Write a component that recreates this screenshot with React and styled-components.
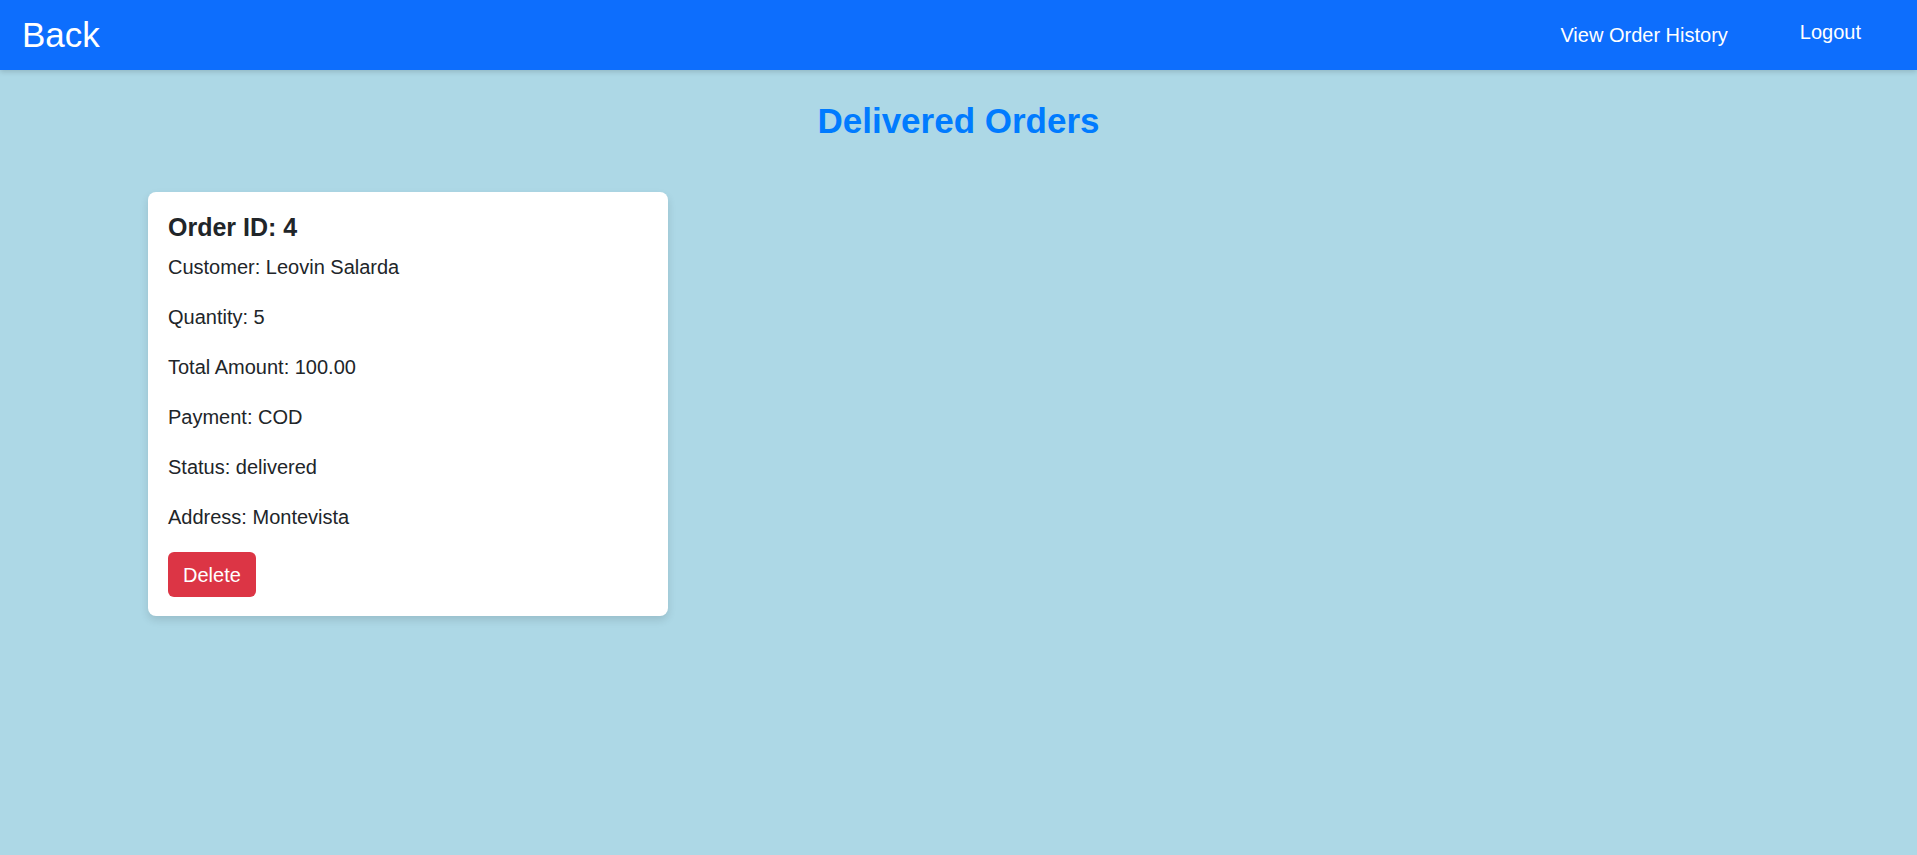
import React from "react";
import styled, { createGlobalStyle } from "styled-components";

const colors = {
  page: "#add8e6",
  nav: "#0d6efd",
  title: "#007bff",
  text: "#212529",
  danger: "#dc3545",
  white: "#ffffff",
};

const GlobalStyle = createGlobalStyle`
  html, body {
    margin: 0;
    min-height: 100%;
    background: ${colors.page};
    font-family: "Liberation Sans", Arial, sans-serif;
    color: ${colors.text};
  }
  body {
    min-height: 100vh;
  }
`;

const Navbar = styled.nav`
  height: 70px;
  background-color: ${colors.nav};
  display: flex;
  align-items: center;
  justify-content: space-between;
  padding: 0 36px 0 22px;
  box-shadow: 0 2px 5px rgba(0, 0, 0, 0.15);
`;

const BackLink = styled.a`
  color: ${colors.white};
  font-size: 35px;
  text-decoration: none;
  cursor: pointer;
`;

const NavLinks = styled.div`
  display: flex;
  align-items: center;
  gap: 32px;
`;

const NavLink = styled.a`
  color: ${colors.white};
  font-size: 20px;
  padding: 10px 20px;
  text-decoration: none;
  cursor: pointer;
`;

const LogoutButton = styled.button`
  background: ${colors.nav};
  color: ${colors.white};
  border: none;
  font-family: inherit;
  font-size: 20px;
  padding: 10px 20px;
  margin-bottom: 6px;
  cursor: pointer;
`;

const Title = styled.h2`
  text-align: center;
  color: ${colors.title};
  font-size: 35px;
  font-weight: 700;
  line-height: 1.2;
  margin: 30px 0 50px;
`;

const OrderGrid = styled.div`
  display: grid;
  grid-template-columns: repeat(auto-fill, 520px);
  gap: 20px;
  padding: 0 148px;
`;

const OrderCard = styled.div`
  background: ${colors.white};
  border-radius: 8px;
  padding: 20px 20px 19px;
  box-shadow: 0 4px 8px rgba(0, 0, 0, 0.12);
`;

const OrderTitle = styled.h3`
  font-size: 25px;
  font-weight: 700;
  line-height: 1.2;
  margin: 0 0 10px;
`;

const Detail = styled.p`
  font-size: 20px;
  line-height: 1.5;
  margin: 0 0 20px;
`;

const DeleteButton = styled.button`
  background-color: ${colors.danger};
  color: ${colors.white};
  border: none;
  border-radius: 6px;
  font-family: inherit;
  font-size: 20px;
  line-height: 30px;
  padding: 7.5px 15px;
  cursor: pointer;
`;

const orders = [
  {
    id: 4,
    customer: "Leovin Salarda",
    quantity: 5,
    total: "100.00",
    payment: "COD",
    status: "delivered",
    address: "Montevista",
  },
];

function App() {
  return (
    <>
      <GlobalStyle />
      <Navbar>
        <BackLink>Back</BackLink>
        <NavLinks>
          <NavLink>View Order History</NavLink>
          <LogoutButton>Logout</LogoutButton>
        </NavLinks>
      </Navbar>
      <Title>Delivered Orders</Title>
      <OrderGrid>
        {orders.map((order) => (
          <OrderCard key={order.id}>
            <OrderTitle>Order ID: {order.id}</OrderTitle>
            <Detail>Customer: {order.customer}</Detail>
            <Detail>Quantity: {order.quantity}</Detail>
            <Detail>Total Amount: {order.total}</Detail>
            <Detail>Payment: {order.payment}</Detail>
            <Detail>Status: {order.status}</Detail>
            <Detail>Address: {order.address}</Detail>
            <DeleteButton>Delete</DeleteButton>
          </OrderCard>
        ))}
      </OrderGrid>
    </>
  );
}

export default App;
